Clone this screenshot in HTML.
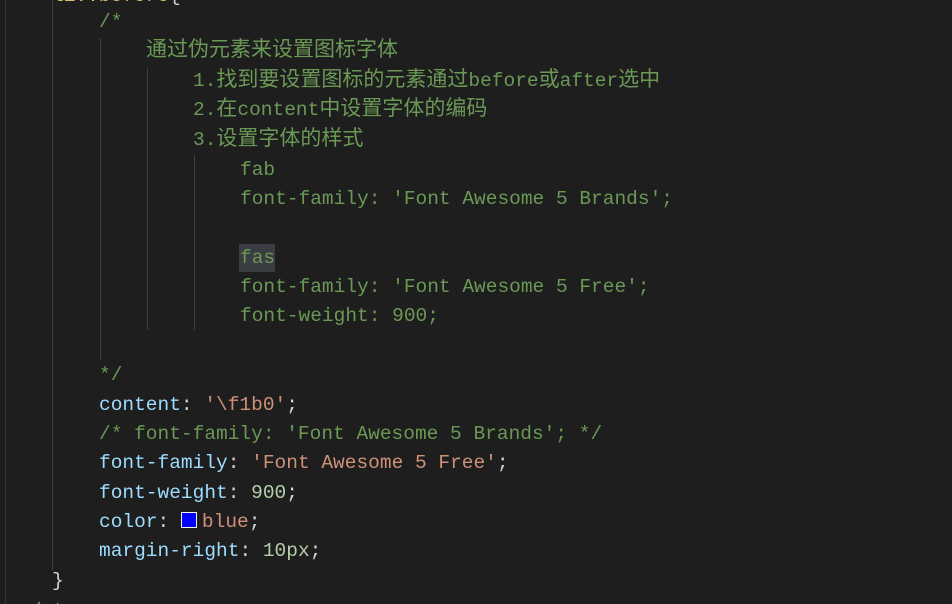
<!DOCTYPE html>
<html style="overflow:hidden;height:604px"><head><meta charset="utf-8"><style>
body{margin:0;width:952px;height:604px;background:#1e1e1e;overflow:hidden;position:relative;font-family:"Liberation Mono","Noto Sans CJK SC",monospace;font-size:19.5px;}
.l{position:absolute;white-space:pre;line-height:29px;height:29px;}
.c{color:#6a9955}.p{color:#9cdcfe}.s{color:#ce9178}.n{color:#b5cea8}.w{color:#d4d4d4}
.z{font-size:21px}
.g{position:absolute;width:1px;background:#404040}
</style></head><body>
<div class="g" style="left:52px;top:0;height:570px"></div>
<div class="g" style="left:100px;top:38px;height:322px"></div>
<div class="g" style="left:147px;top:68px;height:262px"></div>
<div class="g" style="left:194px;top:155px;height:175px"></div>
<div class="g" style="left:5px;top:0;height:604px;background:#333"></div>
<div style="position:absolute;left:239px;top:244px;width:36px;height:28px;background:#3a3d41"></div>
<div class="l w" style="left:52px;top:-18px"><span style="color:#d7ba7d">li::before</span>{</div>
<div class="l c" style="left:99px;top:8px">/*</div>
<div class="l c" style="left:146px;top:37px"><span class="z">通过伪元素来设置图标字体</span></div>
<div class="l c" style="left:193px;top:67px">1.<span class="z">找到要设置图标的元素通过</span>before<span class="z">或</span>after<span class="z">选中</span></div>
<div class="l c" style="left:193px;top:96px">2.<span class="z">在</span>content<span class="z">中设置字体的编码</span></div>
<div class="l c" style="left:193px;top:126px">3.<span class="z">设置字体的样式</span></div>
<div class="l c" style="left:240px;top:156px">fab</div>
<div class="l c" style="left:240px;top:185px">font-family: 'Font Awesome 5 Brands';</div>
<div class="l c" style="left:240px;top:244px">fas</div>
<div class="l c" style="left:240px;top:273px">font-family: 'Font Awesome 5 Free';</div>
<div class="l c" style="left:240px;top:302px">font-weight: 900;</div>
<div class="l c" style="left:99px;top:361px">*/</div>
<div class="l" style="left:99px;top:391px"><span class="p">content</span><span class="w">: </span><span class="s">'\f1b0'</span><span class="w">;</span></div>
<div class="l c" style="left:99px;top:420px">/* font-family: 'Font Awesome 5 Brands'; */</div>
<div class="l" style="left:99px;top:449px"><span class="p">font-family</span><span class="w">: </span><span class="s">'Font Awesome 5 Free'</span><span class="w">;</span></div>
<div class="l" style="left:99px;top:479px"><span class="p">font-weight</span><span class="w">: </span><span class="n">900</span><span class="w">;</span></div>
<div class="l" style="left:99px;top:508px"><span class="p">color</span><span class="w">: </span><span style="display:inline-block;width:14px;height:14px;background:#0000ff;border:1.5px solid #eee;vertical-align:-1px;margin-right:5px"></span><span class="s">blue</span><span class="w">;</span></div>
<div class="l" style="left:99px;top:537px"><span class="p">margin-right</span><span class="w">: </span><span class="n">10px</span><span class="w">;</span></div>
<div class="l w" style="left:52px;top:567px">}</div>
<div class="l w" style="left:18px;top:597px;color:#999">&lt;/st</div>
</body></html>
